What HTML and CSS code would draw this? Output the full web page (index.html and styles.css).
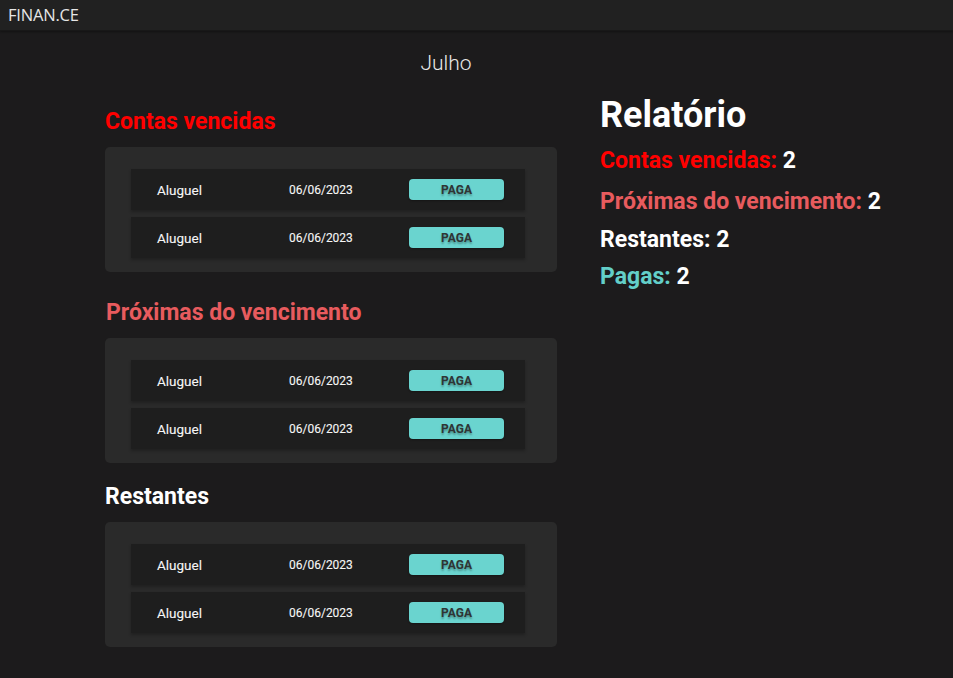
FILE: index.html
```html
<!DOCTYPE html>
<html lang="pt-BR">
<head>
<meta charset="utf-8">
<title>FINAN.CE</title>
<link rel="stylesheet" href="styles.css">
</head>
<body>
<header class="topbar"><span class="brand">FINAN.CE</span></header>
<div class="month">Julho</div>
<main class="layout">
  <div class="lists">
    <section class="group">
      <h2 class="group-title t-overdue">Contas vencidas</h2>
      <div class="card">
        <div class="bill"><span class="bill-name">Aluguel</span><span class="bill-date">06/06/2023</span><button class="pay">PAGA</button></div>
        <div class="bill"><span class="bill-name">Aluguel</span><span class="bill-date">06/06/2023</span><button class="pay">PAGA</button></div>
      </div>
    </section>
    <section class="group group-next">
      <h2 class="group-title t-next">Próximas do vencimento</h2>
      <div class="card">
        <div class="bill"><span class="bill-name">Aluguel</span><span class="bill-date">06/06/2023</span><button class="pay">PAGA</button></div>
        <div class="bill"><span class="bill-name">Aluguel</span><span class="bill-date">06/06/2023</span><button class="pay">PAGA</button></div>
      </div>
    </section>
    <section class="group group-rest">
      <h2 class="group-title t-rest">Restantes</h2>
      <div class="card">
        <div class="bill"><span class="bill-name">Aluguel</span><span class="bill-date">06/06/2023</span><button class="pay">PAGA</button></div>
        <div class="bill"><span class="bill-name">Aluguel</span><span class="bill-date">06/06/2023</span><button class="pay">PAGA</button></div>
      </div>
    </section>
  </div>
  <aside class="report">
    <h1 class="report-title">Relatório</h1>
    <p class="stat"><span class="t-overdue">Contas vencidas:</span> 2</p>
    <p class="stat"><span class="t-next">Próximas do vencimento:</span> 2</p>
    <p class="stat"><span class="t-rest">Restantes:</span> 2</p>
    <p class="stat"><span class="t-paid">Pagas:</span> 2</p>
  </aside>
</main>
</body>
</html>
```

FILE: styles.css
```css
* { box-sizing: border-box; }
html, body { margin: 0; padding: 0; }
body {
  background: #1c1b1c;
  color: #ffffff;
  font-family: Roboto, "Liberation Sans", sans-serif;
  min-height: 678px;
}
.topbar {
  height: 31px;
  background: #212121;
  border-bottom: 1px solid #181818;
  box-shadow: 0 1px 2px rgba(0,0,0,0.35);
  display: flex;
  align-items: center;
  padding-left: 8px;
}
.brand {
  font-family: "Open Sans", sans-serif;
  font-size: 16.5px;
  color: #e6e6e6;
  letter-spacing: -0.2px;
  line-height: 1;
}
.month {
  width: 892px;
  text-align: center;
  font-weight: 300;
  font-size: 21px;
  color: #e8e8e8;
  margin-top: 20px;
  line-height: 24px;
}
.layout {
  display: flex;
  padding-left: 105px;
  gap: 43px;
  margin-top: 20px;
}
.lists { width: 452px; padding-top: 13px; }
.group-title {
  margin: 0;
  font-size: 23px;
  font-weight: 700;
  line-height: 28px;
}
.t-overdue { color: #ff0000; }
.t-next { color: #e85b5e; padding-left: 1px; }
.t-rest { color: #ffffff; }
.t-paid { color: #63cfc9; }
.report .t-next { padding-left: 0; }
.card {
  margin-top: 11px;
  background: #2a2a2a;
  border-radius: 5px;
  padding: 22px 32px 14px 26px;
  display: flex;
  flex-direction: column;
  gap: 7px;
}
.bill {
  height: 41px;
  background: #1e1e1e;
  box-shadow: 0 2px 3px rgba(0,0,0,0.25);
  display: flex;
  align-items: center;
  padding-left: 26px;
  font-size: 13.5px;
  font-weight: 400;
  color: #f6f6f6;
  -webkit-text-stroke: 0.1px #f6f6f6;
}
.bill-name { width: 132px; }
.bill-date { width: 120px; font-size: 12px; }
.pay {
  width: 95px;
  height: 21px;
  border: none;
  border-radius: 4px;
  background: #6ad4cf;
  color: #2f3535;
  font-family: Roboto, "Liberation Sans", sans-serif;
  font-weight: 700;
  font-size: 12px;
  padding: 0;
  -webkit-text-stroke: 0;
  text-shadow: 0 2px 2px rgba(0,0,0,0.3);
  box-shadow: 0 1px 2px rgba(0,0,0,0.3);
}
.group-next { margin-top: 27px; }
.group-rest { margin-top: 20px; }
.report-title {
  margin: 0;
  font-size: 36px;
  font-weight: 700;
  line-height: 40px;
}
.stat {
  margin: 0;
  font-size: 23px;
  font-weight: 700;
  line-height: 28px;
}
.stat:nth-of-type(1) { margin-top: 12px; }
.stat:nth-of-type(2) { margin-top: 13px; }
.stat:nth-of-type(3) { margin-top: 10px; }
.stat:nth-of-type(4) { margin-top: 9px; }
```
